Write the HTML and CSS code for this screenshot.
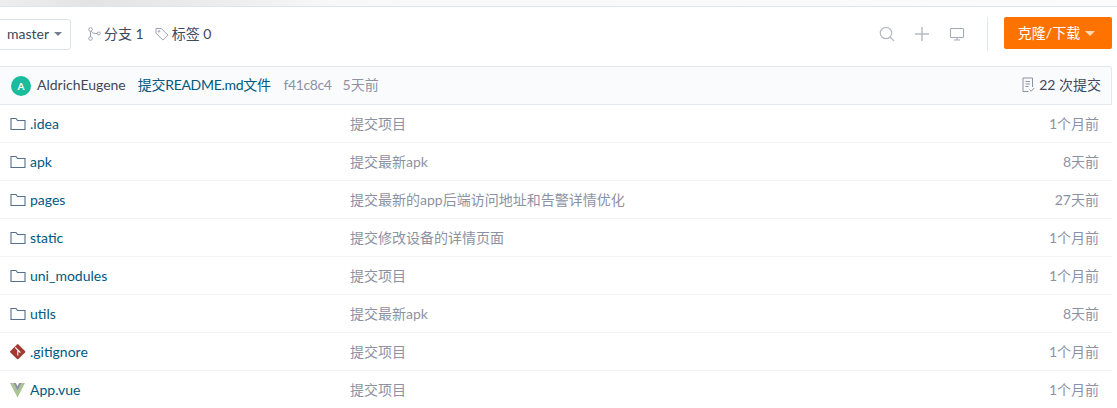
FILE: index.html
```html
<!DOCTYPE html>
<html lang="zh">
<head>
<meta charset="utf-8">
<title>Repository files</title>
<link rel="stylesheet" href="styles.css">
</head>
<body>
<div class="topband"></div>
<main class="page">
  <div class="toolbar">
    <button class="branch">master<span class="caret"></span></button>
    <a class="stat">
      <svg class="stat-icon" viewBox="0 0 13 14" width="13" height="14" fill="none" stroke="#9aa3b2" stroke-width="1"><circle cx="2.500" cy="2.500" r="1.800"/><circle cx="2.500" cy="11.500" r="1.800"/><circle cx="10.800" cy="6.500" r="1.500"/><path d="M2.500 4.300v5.400M3.300 4.200c1 2.300 3.500 2.400 5.900 2.300"/></svg>
      <span>分支 1</span></a>
    <a class="stat">
      <svg class="stat-icon" viewBox="0 0 14 14" width="14" height="14" fill="none" stroke="#9aa3b2" stroke-width="1"><path d="M1 1.500h5.200l6.800 6.600-5 5-7-6.800z"/><circle cx="4" cy="4.400" r=".8"/></svg>
      <span>标签 0</span></a>
    <div class="tools">
      <svg viewBox="0 0 16 16" width="16" height="16" fill="none" stroke="#b4b9c4" stroke-width="1.200"><circle cx="7" cy="7" r="5.700"/><path d="M11 11l4 4"/></svg>
      <svg viewBox="0 0 16 16" width="16" height="16" fill="none" stroke="#b4b9c4" stroke-width="1.400"><path d="M8 1v14M1 8h14"/></svg>
      <svg viewBox="0 0 16 16" width="16" height="16" fill="none" stroke="#a4abb8" stroke-width="1.100"><rect x="1.500" y="2.500" width="13" height="9" rx=".8"/><path d="M8 11.500v2.500M5 14h6"/></svg>
      <span class="divider"></span>
      <button class="clone">克隆/下载<span class="caret caret-light"></span></button>
    </div>
  </div>

  <section class="files">
    <header class="commit">
      <span class="avatar">A</span>
      <span class="author">AldrichEugene</span>
      <a class="commit-msg">提交README.md文件</a>
      <span class="muted sha">f41c8c4</span>
      <span class="muted ago">5天前</span>
      <span class="count">
        <svg viewBox="0 0 13 16" width="13" height="16" fill="none" stroke="#8b94a3" stroke-width="1"><path d="M6.500 14.500H1v-13.500h9.500v9"/><path d="M3.500 4.500h4.500M3.500 7h4.500M3.500 9.500h3M7.500 12.500l1.700 1.700 3-3.200"/></svg>
        <span>22 次提交</span></span>
    </header>
    <div class="row"><span class="name"><svg class="ficon" viewBox="0 0 16 16" width="16" height="16"><path class="folder" d="M1 13.500V2.500h5l1.500 2h7.500v9z"/></svg>.idea</span><span class="msg">提交项目</span><span class="time">1个月前</span></div>
    <div class="row"><span class="name"><svg class="ficon" viewBox="0 0 16 16" width="16" height="16"><path class="folder" d="M1 13.500V2.500h5l1.500 2h7.500v9z"/></svg>apk</span><span class="msg">提交最新apk</span><span class="time">8天前</span></div>
    <div class="row"><span class="name"><svg class="ficon" viewBox="0 0 16 16" width="16" height="16"><path class="folder" d="M1 13.500V2.500h5l1.500 2h7.500v9z"/></svg>pages</span><span class="msg">提交最新的app后端访问地址和告警详情优化</span><span class="time">27天前</span></div>
    <div class="row"><span class="name"><svg class="ficon" viewBox="0 0 16 16" width="16" height="16"><path class="folder" d="M1 13.500V2.500h5l1.500 2h7.500v9z"/></svg>static</span><span class="msg">提交修改设备的详情页面</span><span class="time">1个月前</span></div>
    <div class="row"><span class="name"><svg class="ficon" viewBox="0 0 16 16" width="16" height="16"><path class="folder" d="M1 13.500V2.500h5l1.500 2h7.500v9z"/></svg>uni_modules</span><span class="msg">提交项目</span><span class="time">1个月前</span></div>
    <div class="row"><span class="name"><svg class="ficon" viewBox="0 0 16 16" width="16" height="16"><path class="folder" d="M1 13.500V2.500h5l1.500 2h7.500v9z"/></svg>utils</span><span class="msg">提交最新apk</span><span class="time">8天前</span></div>
    <div class="row"><span class="name"><svg class="ficon" viewBox="0 0 16 16" width="16" height="16"><path d="M7 .400.400 7a1 1 0 0 0 0 1.400L7 15a1 1 0 0 0 1.400 0L15 8.400a1 1 0 0 0 0-1.400L8.400.400A1 1 0 0 0 7 .400z" fill="#a33a32"/><path d="M5.200 3.400l2.600 2.600v5.500M7.800 6l2.600 2.600" stroke="#fff" stroke-width="1.100" fill="none"/></svg>.gitignore</span><span class="msg">提交项目</span><span class="time">1个月前</span></div>
    <div class="row"><span class="name"><svg class="ficon" viewBox="0 0 16 16" width="16" height="16"><path d="M0 1h3.400l4.100 8 4.100-8H15L7.500 15.500z" fill="#a9c48e"/><path d="M3.400 1h2.400l1.700 3.200L9.200 1h2.400L7.500 9z" fill="#8b94a3"/></svg>App.vue</span><span class="msg">提交项目</span><span class="time">1个月前</span></div>
  </section>
</main>
</body>
</html>
```
FILE: styles.css
```css
* { box-sizing: border-box; }
html, body { margin: 0; height: 408px; overflow: hidden; background: #fff; }
body { font-family: Lato, "Noto Sans CJK SC", sans-serif; font-size: 14px; line-height: 20px; color: #40485b; }
.topband {
  height: 7px;
  background: linear-gradient(90deg, #eeeeee 0, #e3e3e3 8%, #ededed 20%, #f8f8f8 30%, #fbfbfb 100%);
  border-bottom: 1px solid #dfe4ea;
}
.page { padding-right: 5px; }
.toolbar { display: flex; align-items: center; height: 59px; padding-bottom: 5px; }
.branch {
  display: flex; align-items: center;
  width: 81px; height: 31px; margin-left: -10px; padding: 0 0 0 16px;
  background: #fff; border: 1px solid #dce3e9; border-radius: 3px;
  font: inherit; color: #40485b;
}
.caret { width: 0; height: 0; margin-left: 5px; border: 4px solid transparent; border-top: 4px solid #777f8d; border-bottom: 0; }
.caret-light { border-top-color: #ffd9b8; border-left-width: 5px; border-right-width: 5px; border-top-width: 5px; margin-left: 5px; }
.stat { display: flex; align-items: center; gap: 3px; margin-left: 17px; }
.stat + .stat { margin-left: 11px; }
.tools { display: flex; align-items: center; margin-left: auto; gap: 19px; }
.tools > svg { flex: none; }
.divider { width: 1px; height: 34px; margin-left: 3px; margin-right: -3px; background: #e3e7ee; }
.clone {
  display: flex; align-items: center; justify-content: center;
  width: 108px; height: 32px; margin-bottom: 2px; padding-right: 9px;
  background: #fe7300; border: 0; border-radius: 2px;
  color: #fff; font: inherit;
}
.commit {
  display: flex; align-items: center;
  height: 39px; padding: 0 10px 0 11px;
  background: #fafbfc; border: 1px solid #e3e7ee; border-left: 0;
  border-radius: 0 3px 0 0;
}
.commit > span, .commit > a { margin-bottom: 1px; }
.avatar {
  display: flex; align-items: center; justify-content: center;
  width: 20px; height: 20px; border-radius: 50%;
  background: #1abc9c; color: #fff; font-size: 10px; font-weight: 700;
}
.commit > .avatar { margin-bottom: 0; }
.author { margin-left: 6px; }
.commit-msg { margin-left: 12px; color: #005980; letter-spacing: -.3px; }
.muted { color: #8c92a4; }
.sha { margin-left: 13px; letter-spacing: -.4px; }
.ago { margin-left: 11px; }
.count { display: flex; align-items: center; gap: 4px; margin-left: auto; }
.row {
  display: flex; align-items: center;
  height: 38px; padding: 0 13px 0 10px;
  border-bottom: 1px solid #f2f4f7;
}
.name { display: flex; align-items: center; gap: 4px; width: 340px; color: #005980; }
.ficon { flex: none; }
.folder { fill: none; stroke: #55708d; stroke-width: 1.100; }
.msg { flex: 1; color: #8c92a4; }
.time { color: #8c92a4; }
```
